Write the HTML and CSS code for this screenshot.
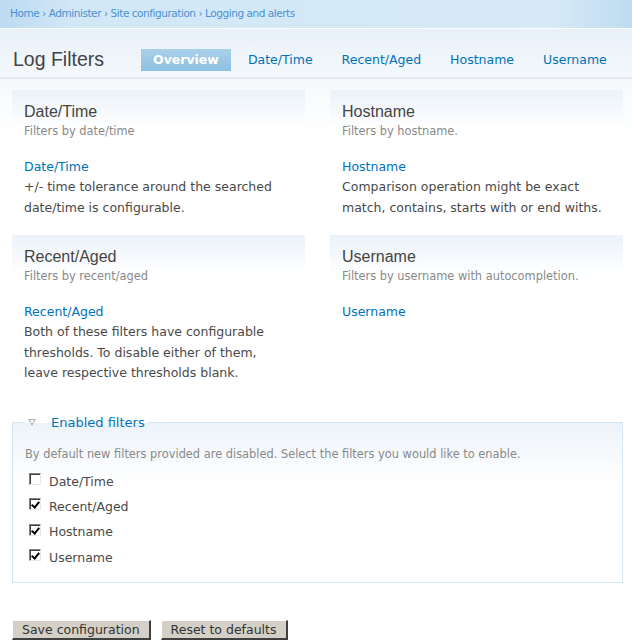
FILE: index.html
```html
<!DOCTYPE html>
<html lang="en">
<head>
    <meta charset="UTF-8">
    <title>Log Filters</title>
    <link rel="stylesheet" href="styles.css">
</head>
<body>
    <div class="breadcrumb">
        <a href="#">Home</a> › <a href="#">Administer</a> › <a href="#">Site configuration</a> › <a href="#">Logging and alerts</a>
    </div>

    <div class="page-head">
        <h1>Log Filters</h1>
        <ul class="tabs">
            <li class="active"><a href="#">Overview</a></li>
            <li><a href="#">Date/Time</a></li>
            <li><a href="#">Recent/Aged</a></li>
            <li><a href="#">Hostname</a></li>
            <li><a href="#">Username</a></li>
        </ul>
    </div>

    <div class="content">
        <div class="panels">
            <div class="panel">
                <div class="panel-head">
                    <h3>Date/Time</h3>
                    <div class="sub">Filters by date/time</div>
                </div>
                <a href="#" class="panel-link">Date/Time</a>
                <p>+/- time tolerance around the searched date/time is configurable.</p>
            </div>
            <div class="panel">
                <div class="panel-head">
                    <h3>Hostname</h3>
                    <div class="sub">Filters by hostname.</div>
                </div>
                <a href="#" class="panel-link">Hostname</a>
                <p>Comparison operation might be exact match, contains, starts with or end withs.</p>
            </div>
            <div class="panel">
                <div class="panel-head">
                    <h3>Recent/Aged</h3>
                    <div class="sub">Filters by recent/aged</div>
                </div>
                <a href="#" class="panel-link">Recent/Aged</a>
                <p>Both of these filters have configurable thresholds. To disable either of them, leave respective thresholds blank.</p>
            </div>
            <div class="panel">
                <div class="panel-head">
                    <h3>Username</h3>
                    <div class="sub">Filters by username with autocompletion.</div>
                </div>
                <a href="#" class="panel-link">Username</a>
            </div>
        </div>

        <fieldset class="filters">
            <legend><span class="arrow"></span><a href="#">Enabled filters</a></legend>
            <p class="description">By default new filters provided are disabled. Select the filters you would like to enable.</p>
            <label class="check"><span class="box"></span>Date/Time</label>
            <label class="check"><span class="box checked"></span>Recent/Aged</label>
            <label class="check"><span class="box checked"></span>Hostname</label>
            <label class="check"><span class="box checked"></span>Username</label>
        </fieldset>

        <div class="actions">
            <button type="button">Save configuration</button>
            <button type="button">Reset to defaults</button>
        </div>
    </div>
</body>
</html>
```

FILE: styles.css
```css
*{
    margin: 0;
    padding: 0;
    box-sizing: border-box;
}

body{
    font-family: "DejaVu Sans", Verdana, sans-serif;
    font-size: 12px;
    color: #494949;
    background: #fff;
    width: 632px;
}

a{
    color: #0072b9;
    text-decoration: none;
}

.breadcrumb{
    height: 29px;
    padding: 7px 10px 0;
    font-size: 10.5px;
    letter-spacing: -0.45px;
    color: #4a90d2;
    background: linear-gradient(to right, #bcdaf1 0, #d3e8f7 12%, #d5e9f7 88%, #bfdbf1 100%);
    border-bottom: 1px solid #fff;
}
.breadcrumb a{
    color: #4a90d2;
}

.page-head{
    display: flex;
    align-items: center;
    height: 50px;
    padding: 13px 12px 0 13px;
    background: linear-gradient(#e8f1f9, #f4f8fb);
    border-bottom: 2px solid #e3e9ee;
}
h1{
    flex-shrink: 0;
    font-family: "Liberation Sans", Arial, sans-serif;
    font-weight: normal;
    font-size: 19.5px;
    color: #444;
    width: 128px;
}
.tabs{
    list-style: none;
    display: flex;
    gap: 5px;
    font-size: 12.5px;
}
.tabs a{
    display: block;
    height: 22px;
    line-height: 22px;
    padding: 0 12px;
}
.tabs .active a{
    color: #fff;
    font-weight: bold;
    background: linear-gradient(#a9d0ea, #8dbfe1);
}

.content{
    padding: 11px 9px 0 12px;
    background: linear-gradient(#f6f9fc, #fff 60px);
}

.panels{
    display: grid;
    grid-template-columns: 293px 293px;
    column-gap: 25px;
    row-gap: 12px;
}
.panel{
    min-height: 133px;
    font-size: 12.5px;
    line-height: 20px;
}
.panel-head{
    padding: 12px 12px 0;
    height: 51px;
    background: linear-gradient(#ebf2f9, #fff 40px);
    margin-bottom: 16px;
}
.panel h3{
    font-family: "Liberation Sans", Arial, sans-serif;
    font-weight: normal;
    font-size: 16px;
    line-height: 20px;
    color: #444;
}
.panel .sub{
    font-size: 11.4px;
    line-height: 18px;
    color: #898989;
}
.panel-link{
    display: block;
    margin: 0 12px;
}
.panel p{
    margin: 0 12px;
    line-height: 20.5px;
}

.filters{
    margin-top: 31px;
    width: 611px;
    height: 168px;
    border: 1px solid #d4e6f3;
    padding: 17px 12px 0;
    background: linear-gradient(#ecf3f9, #fff 60px);
}
.filters legend{
    display: flex;
    align-items: center;
    padding: 0 3px 0 3px;
    font-size: 13px;
}
.arrow{
    width: 0;
    height: 0;
    border-left: 4px solid transparent;
    border-right: 4px solid transparent;
    border-top: 7px solid #b5b5b5;
    margin-right: 15px;
    position: relative;
}
.arrow::after{
    content: "";
    position: absolute;
    left: -2px;
    top: -6px;
    border-left: 2px solid transparent;
    border-right: 2px solid transparent;
    border-top: 4px solid #fff;
}
.description{
    font-size: 11.4px;
    color: #898989;
    margin-bottom: 8px;
}
.check{
    display: flex;
    align-items: center;
    height: 25.3px;
    padding-left: 4px;
    font-size: 12.5px;
}
.box{
    width: 12px;
    height: 12px;
    margin-right: 8px;
    margin-top: -4px;
    border-top: 1px solid #808080;
    border-left: 1px solid #808080;
    border-right: 1px solid #e8e8e8;
    border-bottom: 1px solid #e8e8e8;
    box-shadow: inset 1px 1px 0 #404040;
    background: #fff;
    position: relative;
}
.box.checked::after{
    content: "";
    position: absolute;
    left: 3px;
    top: 1px;
    width: 3px;
    height: 6px;
    border-right: 2px solid #000;
    border-bottom: 2px solid #000;
    transform: rotate(40deg);
}

.actions{
    display: flex;
    gap: 10px;
    padding: 37px 0 4px;
}
.actions button{
    font-family: "DejaVu Sans", Verdana, sans-serif;
    font-size: 12.5px;
    color: #333;
    height: 20px;
    padding: 0 9px;
    background: #d4d0c8;
    border-top: 1px solid #fff;
    border-left: 1px solid #fff;
    border-right: 2px solid #404040;
    border-bottom: 2px solid #404040;
}
```
